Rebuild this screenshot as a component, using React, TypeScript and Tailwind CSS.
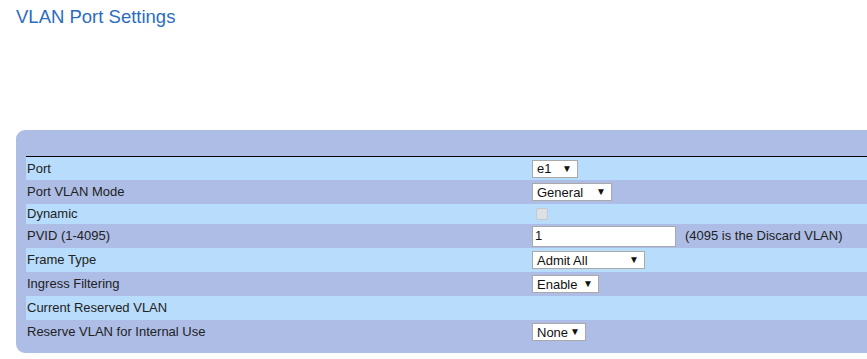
import React from 'react';

type Row = {
  label: string;
  height: string;
  tone: 'light' | 'dark';
  control?: React.ReactNode;
};

const Select: React.FC<{ value: string; width: string }> = ({ value, width }) => (
  <div className={`${width} h-[18px] bg-white border border-[#a9a9a9] flex items-center justify-between pl-[4px] pr-[5px] text-[13px] leading-none text-[#111]`}>
    <span>{value}</span>
    <span className="text-[10px] leading-none">▼</span>
  </div>
);

const rows: Row[] = [
  { label: 'Port', height: 'h-[23px]', tone: 'light', control: <Select value="e1" width="w-[46px]" /> },
  { label: 'Port VLAN Mode', height: 'h-[24px]', tone: 'dark', control: <Select value="General" width="w-[80px]" /> },
  {
    label: 'Dynamic',
    height: 'h-[20px]',
    tone: 'light',
    control: <div className="ml-[4px] w-[12px] h-[12px] rounded-[2px] border border-[#c4c8cf] bg-[#dde1e6]" />,
  },
  {
    label: 'PVID (1-4095)',
    height: 'h-[24px]',
    tone: 'dark',
    control: (
      <div className="flex items-center">
        <div className="w-[144px] h-[21px] bg-white border border-[#a9a9a9] flex items-center pl-[2px] text-[13px] text-[#111]">1</div>
        <span className="ml-[9px] text-[13px] text-[#222]">(4095 is the Discard VLAN)</span>
      </div>
    ),
  },
  { label: 'Frame Type', height: 'h-[24px]', tone: 'light', control: <Select value="Admit All" width="w-[113px]" /> },
  { label: 'Ingress Filtering', height: 'h-[24px]', tone: 'dark', control: <Select value="Enable" width="w-[67px]" /> },
  { label: 'Current Reserved VLAN', height: 'h-[24px]', tone: 'light' },
  { label: 'Reserve VLAN for Internal Use', height: 'h-[24px]', tone: 'dark', control: <Select value="None" width="w-[54px]" /> },
];

export default function App() {
  return (
    <div className="w-[867px] h-[359px] overflow-hidden bg-white font-['Liberation_Sans',Arial,sans-serif]">
      <h1 className="pl-[16px] pt-[5px] text-[18.5px] leading-[24px] text-[#2a6cc0]">VLAN Port Settings</h1>

      <div className="mt-[101px] ml-[16px] w-[880px] rounded-l-[9px] bg-[#adbde6] pl-[10px] pt-[26px] pb-[9px]">
        <div className="border-t border-black">
          {rows.map(row => (
            <div
              key={row.label}
              className={`flex items-center ${row.height} ${row.tone === 'light' ? 'bg-[#b8dcfb]' : 'bg-[#adbde6]'}`}
            >
              <div className="w-[506px] pl-[1px] text-[13px] text-[#222]">{row.label}</div>
              <div className="flex items-center">{row.control}</div>
            </div>
          ))}
        </div>
      </div>
    </div>
  );
}
